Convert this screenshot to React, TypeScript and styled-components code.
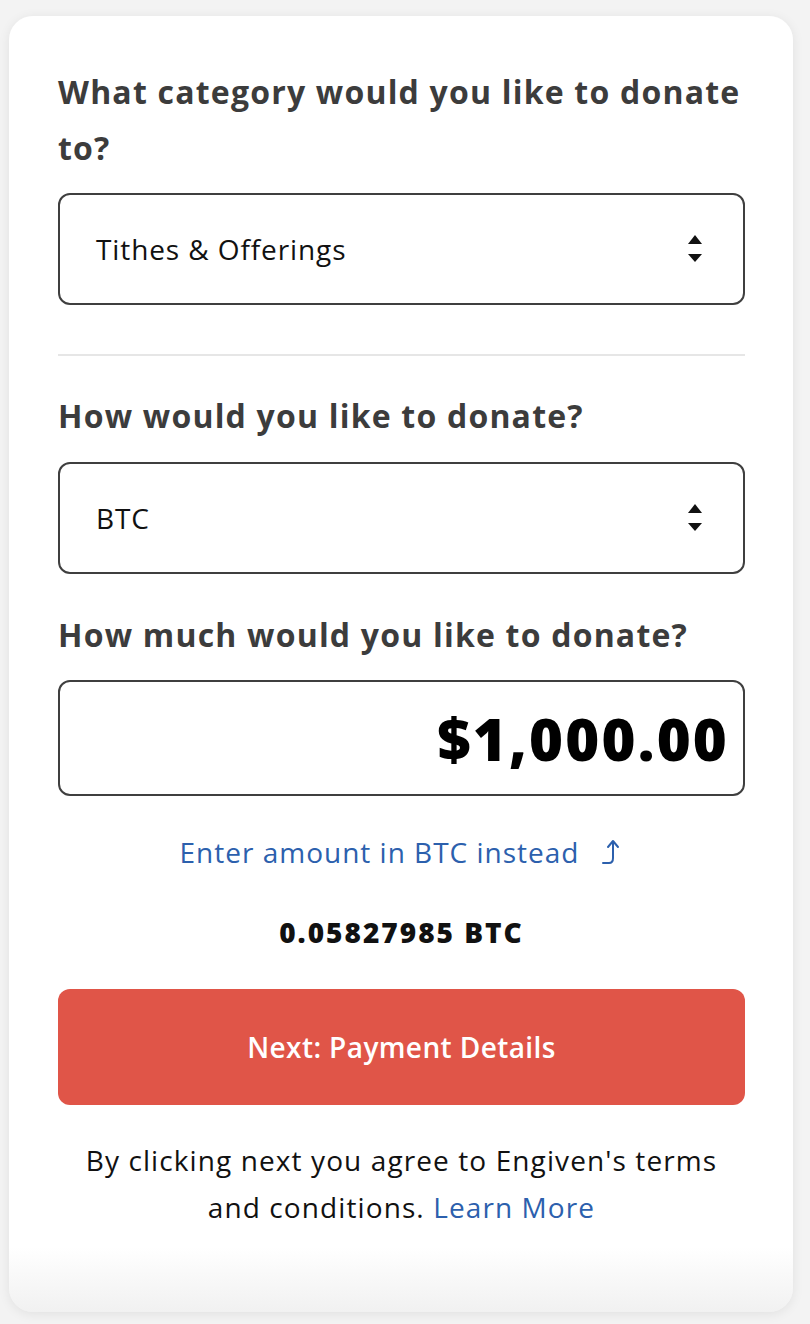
import React, { useState } from "react";
import styled, { createGlobalStyle } from "styled-components";

const GlobalStyle = createGlobalStyle`
  html, body {
    margin: 0;
    padding: 0;
    background-color: #f3f3f3;
    font-family: "Open Sans", "Noto Sans", sans-serif;
  }
`;

const Page = styled.div`
  padding: 16px 17px 11px 9px;
  min-height: 1324px;
  box-sizing: border-box;
`;

const Card = styled.div`
  display: flex;
  flex-direction: column;
  padding: 48px 48px 81px 49px;
  border-radius: 24px;
  background: linear-gradient(to bottom, #ffffff 0%, #ffffff 95%, #f1f1f1 100%);
  box-shadow: 0 2px 12px rgba(0, 0, 0, 0.08);
`;

const Heading = styled.h2`
  margin: 0;
  font-size: 32px;
  line-height: 56px;
  font-weight: 700;
  letter-spacing: 1.2px;
  color: #3c3c3c;
`;

const Field = styled.div<{ $top: number }>`
  margin-top: ${({ $top }) => $top}px;
`;

const SelectBox = styled.div`
  display: flex;
  align-items: center;
  justify-content: space-between;
  height: 112px;
  box-sizing: border-box;
  padding: 0 41px 0 36px;
  border: 2px solid #3f3f3f;
  border-radius: 12px;
  font-size: 28px;
  letter-spacing: 0.9px;
  color: #111;
`;

const AmountBox = styled.div`
  display: flex;
  align-items: center;
  justify-content: flex-end;
  height: 116px;
  box-sizing: border-box;
  padding: 0 14px 0 16px;
  border: 2px solid #3f3f3f;
  border-radius: 12px;
  font-size: 58px;
  font-weight: 800;
  letter-spacing: 2.2px;
  color: #000;
`;

const Divider = styled.hr`
  margin: 49px 0 32px;
  border: 0;
  height: 2px;
  background: #e6e6e6;
`;

const SwitchLink = styled.a`
  display: flex;
  align-items: center;
  justify-content: center;
  gap: 22px;
  margin-top: 36px;
  line-height: 40px;
  font-size: 28px;
  letter-spacing: 1px;
  color: #2c60ad;
  text-decoration: none;
  cursor: pointer;
`;

const Converted = styled.div`
  margin-top: 40px;
  text-align: center;
  line-height: 40px;
  font-size: 28px;
  font-weight: 800;
  letter-spacing: 2px;
  color: #111;
`;

const NextButton = styled.button`
  margin-top: 37px;
  height: 116px;
  border: 0;
  border-radius: 12px;
  background: #e05548;
  color: #fff;
  font-family: inherit;
  font-size: 28px;
  font-weight: 600;
  letter-spacing: 0.4px;
  cursor: pointer;
`;

const Terms = styled.p`
  margin: 32px 0 0;
  text-align: center;
  font-size: 28px;
  line-height: 47px;
  letter-spacing: 1.1px;
  color: #111;
`;

const TermsLink = styled.a`
  color: #2c60ad;
  text-decoration: none;
`;

const SortArrows = () => (
  <svg width="14" height="28" viewBox="0 0 14 28">
    <path d="M7 0 L14 9 L0 9 Z" fill="#111" />
    <path d="M0 19 L14 19 L7 27 Z" fill="#111" />
  </svg>
);

const CurveArrow = () => (
  <svg width="22" height="26" viewBox="0 0 22 26" fill="none" stroke="#2c60ad" strokeWidth="2" strokeLinecap="round" strokeLinejoin="round">
    <path d="M2 24 H8 Q12 24 12 19 V3" />
    <path d="M7 8 L12 2 L17 8" />
  </svg>
);

export default function App() {
  const [category] = useState("Tithes & Offerings");
  const [method] = useState("BTC");

  return (
    <>
      <GlobalStyle />
      <Page>
        <Card>
          <Heading>What category would you like to donate to?</Heading>
          <Field $top={17}>
            <SelectBox>
              {category}
              <SortArrows />
            </SelectBox>
          </Field>
          <Divider />
          <Heading>How would you like to donate?</Heading>
          <Field $top={18}>
            <SelectBox>
              {method}
              <SortArrows />
            </SelectBox>
          </Field>
          <Field $top={33}>
            <Heading>How much would you like to donate?</Heading>
          </Field>
          <Field $top={17}>
            <AmountBox>$1,000.00</AmountBox>
          </Field>
          <SwitchLink>
            Enter amount in BTC instead
            <CurveArrow />
          </SwitchLink>
          <Converted>0.05827985 BTC</Converted>
          <NextButton>Next: Payment Details</NextButton>
          <Terms>
            By clicking next you agree to Engiven's terms
            <br />
            and conditions. <TermsLink>Learn More</TermsLink>
          </Terms>
        </Card>
      </Page>
    </>
  );
}
